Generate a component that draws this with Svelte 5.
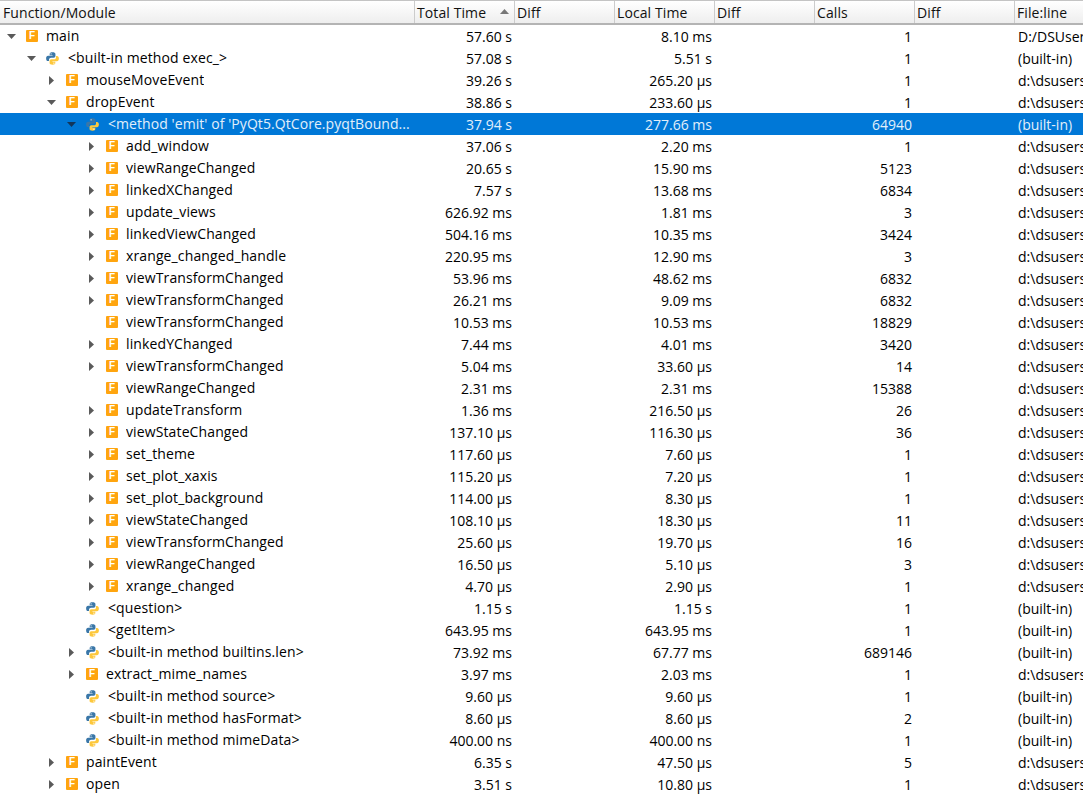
<script lang="ts">
	// depth, expander (o open, c closed, - none), icon (f / p), then the columns
	const rows: [number, string, string, string, string, string, string, string][] = [
		[0, 'o', 'f', 'main', '57.60 s', '8.10 ms', '1', 'D:/DSUsers'],
		[1, 'o', 'p', '<built-in method exec_>', '57.08 s', '5.51 s', '1', '(built-in)'],
		[2, 'c', 'f', 'mouseMoveEvent', '39.26 s', '265.20 µs', '1', 'd:\\dsusers'],
		[2, 'o', 'f', 'dropEvent', '38.86 s', '233.60 µs', '1', 'd:\\dsusers'],
		[3, 'o', 'p', "<method 'emit' of 'PyQt5.QtCore.pyqtBound...", '37.94 s', '277.66 ms', '64940', '(built-in)'],
		[4, 'c', 'f', 'add_window', '37.06 s', '2.20 ms', '1', 'd:\\dsusers'],
		[4, 'c', 'f', 'viewRangeChanged', '20.65 s', '15.90 ms', '5123', 'd:\\dsusers'],
		[4, 'c', 'f', 'linkedXChanged', '7.57 s', '13.68 ms', '6834', 'd:\\dsusers'],
		[4, 'c', 'f', 'update_views', '626.92 ms', '1.81 ms', '3', 'd:\\dsusers'],
		[4, 'c', 'f', 'linkedViewChanged', '504.16 ms', '10.35 ms', '3424', 'd:\\dsusers'],
		[4, 'c', 'f', 'xrange_changed_handle', '220.95 ms', '12.90 ms', '3', 'd:\\dsusers'],
		[4, 'c', 'f', 'viewTransformChanged', '53.96 ms', '48.62 ms', '6832', 'd:\\dsusers'],
		[4, 'c', 'f', 'viewTransformChanged', '26.21 ms', '9.09 ms', '6832', 'd:\\dsusers'],
		[4, '-', 'f', 'viewTransformChanged', '10.53 ms', '10.53 ms', '18829', 'd:\\dsusers'],
		[4, 'c', 'f', 'linkedYChanged', '7.44 ms', '4.01 ms', '3420', 'd:\\dsusers'],
		[4, 'c', 'f', 'viewTransformChanged', '5.04 ms', '33.60 µs', '14', 'd:\\dsusers'],
		[4, '-', 'f', 'viewRangeChanged', '2.31 ms', '2.31 ms', '15388', 'd:\\dsusers'],
		[4, 'c', 'f', 'updateTransform', '1.36 ms', '216.50 µs', '26', 'd:\\dsusers'],
		[4, 'c', 'f', 'viewStateChanged', '137.10 µs', '116.30 µs', '36', 'd:\\dsusers'],
		[4, 'c', 'f', 'set_theme', '117.60 µs', '7.60 µs', '1', 'd:\\dsusers'],
		[4, 'c', 'f', 'set_plot_xaxis', '115.20 µs', '7.20 µs', '1', 'd:\\dsusers'],
		[4, 'c', 'f', 'set_plot_background', '114.00 µs', '8.30 µs', '1', 'd:\\dsusers'],
		[4, 'c', 'f', 'viewStateChanged', '108.10 µs', '18.30 µs', '11', 'd:\\dsusers'],
		[4, 'c', 'f', 'viewTransformChanged', '25.60 µs', '19.70 µs', '16', 'd:\\dsusers'],
		[4, 'c', 'f', 'viewRangeChanged', '16.50 µs', '5.10 µs', '3', 'd:\\dsusers'],
		[4, 'c', 'f', 'xrange_changed', '4.70 µs', '2.90 µs', '1', 'd:\\dsusers'],
		[3, '-', 'p', '<question>', '1.15 s', '1.15 s', '1', '(built-in)'],
		[3, '-', 'p', '<getItem>', '643.95 ms', '643.95 ms', '1', '(built-in)'],
		[3, 'c', 'p', '<built-in method builtins.len>', '73.92 ms', '67.77 ms', '689146', '(built-in)'],
		[3, 'c', 'f', 'extract_mime_names', '3.97 ms', '2.03 ms', '1', 'd:\\dsusers'],
		[3, '-', 'p', '<built-in method source>', '9.60 µs', '9.60 µs', '1', '(built-in)'],
		[3, '-', 'p', '<built-in method hasFormat>', '8.60 µs', '8.60 µs', '2', '(built-in)'],
		[3, '-', 'p', '<built-in method mimeData>', '400.00 ns', '400.00 ns', '1', '(built-in)'],
		[2, 'c', 'f', 'paintEvent', '6.35 s', '47.50 µs', '5', 'd:\\dsusers'],
		[2, 'c', 'f', 'open', '3.51 s', '10.80 µs', '1', 'd:\\dsusers']
	];
	const selected = 4;
</script>

<div class="profile">
	<div class="head">
		<div class="hcell name">Function/Module</div>
		<div class="hcell num sorted">Total Time<svg class="sort" width="9" height="5" viewBox="0 0 9 5"><path d="M4.500 0 9 5H0z" fill="#777" /></svg></div>
		<div class="hcell num">Diff</div>
		<div class="hcell num">Local Time</div>
		<div class="hcell num">Diff</div>
		<div class="hcell num">Calls</div>
		<div class="hcell num">Diff</div>
		<div class="hcell file">File:line</div>
	</div>

	{#each rows as [depth, exp, icon, name, total, local, calls, file], i}
		<div class="row" class:sel={i === selected}>
			<div class="cell name tree" style="padding-left: {4 + depth * 20}px">
				<span class="arrow">
					{#if exp === 'o'}
						<svg width="9" height="5" viewBox="0 0 9 5"><path d="M0 0h9L4.500 5z" fill={i === selected ? '#12365a' : '#5a5a5a'} /></svg>
					{:else if exp === 'c'}
						<svg width="5" height="9" viewBox="0 0 5 9"><path d="M0 0l5 4.500L0 9z" fill="#5a5a5a" /></svg>
					{/if}
				</span>
				{#if icon === 'f'}
					<span class="ficon">F</span>
				{:else}
					<svg class="py" width="13" height="13" viewBox="0 0 12 12">
						<path d="M5.900.2C4.200.2 3.400.8 3.400 1.800V3h2.700v.5H1.900C.8 3.500.1 4.400.1 5.900s.7 2.500 1.700 2.500h1V7c0-1 .9-1.800 1.900-1.800h2.500c.9 0 1.500-.7 1.500-1.500V1.800C8.700.8 7.700.2 5.900.2z" fill="#3a77a8" />
						<path d="M6.100 11.800c1.700 0 2.500-.6 2.500-1.600V9H5.900v-.5h4.200c1.100 0 1.800-.9 1.800-2.400s-.7-2.500-1.700-2.500h-1V5c0 1-.9 1.800-1.900 1.800H4.800c-.9 0-1.500.7-1.500 1.500v1.900c0 1 1 1.600 2.800 1.600z" fill="#fdc83c" />
						<circle cx="4.700" cy="1.700" r=".55" fill="#fff" />
						<circle cx="7.300" cy="10.300" r=".55" fill="#fff" />
					</svg>
				{/if}
				<span class="label" class:plabel={icon === 'p'}>{name}</span>
			</div>
			<div class="cell num">{total}</div>
			<div class="cell num"></div>
			<div class="cell num">{local}</div>
			<div class="cell num"></div>
			<div class="cell num">{calls}</div>
			<div class="cell num"></div>
			<div class="cell file">{file}</div>
		</div>
	{/each}
</div>

<style>
	:global(body) {
		background: #fff;
		overflow: hidden;
	}

	.profile {
		width: 1083px;
		height: 797px;
		overflow: hidden;
		font-family: 'Open Sans', 'Noto Sans', sans-serif;
		font-size: 14px;
		color: #000;
	}

	.head,
	.row {
		display: grid;
		grid-template-columns: 415px repeat(6, 100px) 100px;
		width: 1115px;
	}

	.head {
		height: 25px;
		box-sizing: border-box;
		border-top: 1px solid #c4c4c4;
		border-bottom: 2px solid #b4b4b4;
		background: linear-gradient(#ffffff, #eeeeee);
	}

	.hcell {
		display: flex;
		align-items: center;
		justify-content: space-between;
		padding: 1px 0 0 2px;
		border-right: 1px solid #cccccc;
		white-space: nowrap;
		overflow: hidden;
		color: #111;
		letter-spacing: 0.1px;
	}

	.hcell.name {
		padding-left: 3px;
	}

	.sort {
		margin-right: 5px;
		margin-bottom: 3px;
	}

	.row {
		height: 22px;
	}

	.row.sel {
		background: #0078d7;
		color: #e2effa;
	}

	.cell {
		line-height: 24px;
		white-space: nowrap;
		overflow: hidden;
	}

	.cell.num {
		text-align: right;
		padding-right: 3px;
	}

	.cell.file {
		padding-left: 3px;
	}

	.tree {
		display: flex;
		align-items: center;
	}

	.arrow {
		width: 14px;
		flex: none;
		display: flex;
		align-items: center;
		justify-content: center;
	}

	.ficon {
		flex: none;
		width: 12px;
		height: 12px;
		margin-left: 8px;
		border-radius: 1px;
		background: #ffa50f;
		color: #fff;
		font-family: 'Liberation Sans', sans-serif;
		font-size: 10px;
		font-weight: 700;
		line-height: 12px;
		text-align: center;
	}

	.py {
		flex: none;
		margin-left: 8px;
	}

	.label {
		margin-left: 8px;
		overflow: hidden;
		letter-spacing: 0.12px;
	}

	.plabel {
		margin-left: 9px;
	}

	.sel .label {
		letter-spacing: 0.07px;
	}
</style>
